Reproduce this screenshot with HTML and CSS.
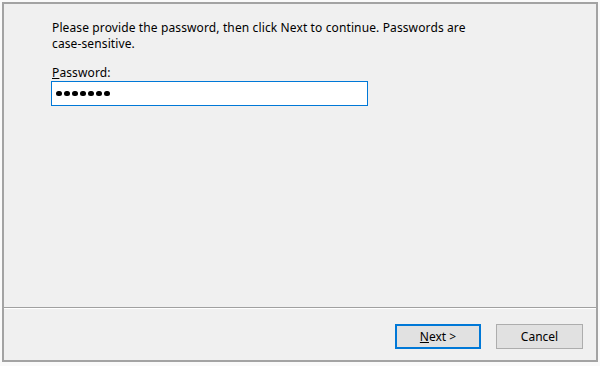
FILE: index.html
```html
<!DOCTYPE html>
<html>
<head>
<meta charset="utf-8">
<link rel="stylesheet" href="styles.css">
</head>
<body>
<div class="dialog">
  <div class="content">
    <p class="intro">Please provide the password, then click Next to continue. Passwords are<br>case-sensitive.</p>
    <label class="label"><span class="u">P</span>assword:</label>
    <div class="input">
      <span class="dot"></span><span class="dot"></span><span class="dot"></span><span class="dot"></span><span class="dot"></span><span class="dot"></span><span class="dot"></span>
    </div>
  </div>
  <div class="sep"></div>
  <div class="footer">
    <button class="btn primary"><span class="u">N</span>ext &gt;</button>
    <button class="btn">Cancel</button>
  </div>
</div>
</body>
</html>
```
FILE: styles.css
```css
html, body {
  margin: 0;
  padding: 0;
  background: #fafafa;
  width: 600px;
  height: 366px;
  overflow: hidden;
}
body {
  padding: 2px 2px 0 2px;
  box-sizing: border-box;
  font-family: "Noto Sans", "Segoe UI", sans-serif;
  font-size: 12px;
  color: #000;
}
.dialog {
  width: 596px;
  height: 360px;
  box-sizing: border-box;
  border: 2px solid #a3a3a3;
  background: #f0f0f0;
  display: flex;
  flex-direction: column;
}
.content {
  flex: 1;
  padding: 16px 0 0 47px;
}
.intro {
  margin: 0;
  padding-left: 1px;
  line-height: 16px;
  letter-spacing: 0.12px;
}
.label {
  display: block;
  margin-top: 13px;
  padding-left: 1px;
  line-height: 16px;
  letter-spacing: 0.12px;
}
.u {
  text-decoration: underline;
}
.input {
  margin-top: 0;
  width: 317px;
  height: 25px;
  box-sizing: border-box;
  border: 1px solid #0078d7;
  background: #fff;
  display: flex;
  align-items: center;
  gap: 2.5px;
  padding-left: 4px;
}
.dot {
  width: 5.5px;
  height: 5.5px;
  border-radius: 50%;
  background: #000;
}
.sep {
  height: 1px;
  background: #a0a0a0;
  border-bottom: 1px solid #fff;
}
.footer {
  height: 51px;
  display: flex;
  justify-content: flex-end;
  align-items: flex-start;
  gap: 15px;
  padding: 15px 13px 0 0;
  box-sizing: border-box;
}
.btn {
  width: 87px;
  height: 25px;
  box-sizing: border-box;
  border: 1px solid #adadad;
  background: #e1e1e1;
  font-family: inherit;
  font-size: 12px;
  color: #000;
  padding: 0;
}
.btn.primary {
  width: 86px;
  border: 2px solid #0078d7;
}
```
